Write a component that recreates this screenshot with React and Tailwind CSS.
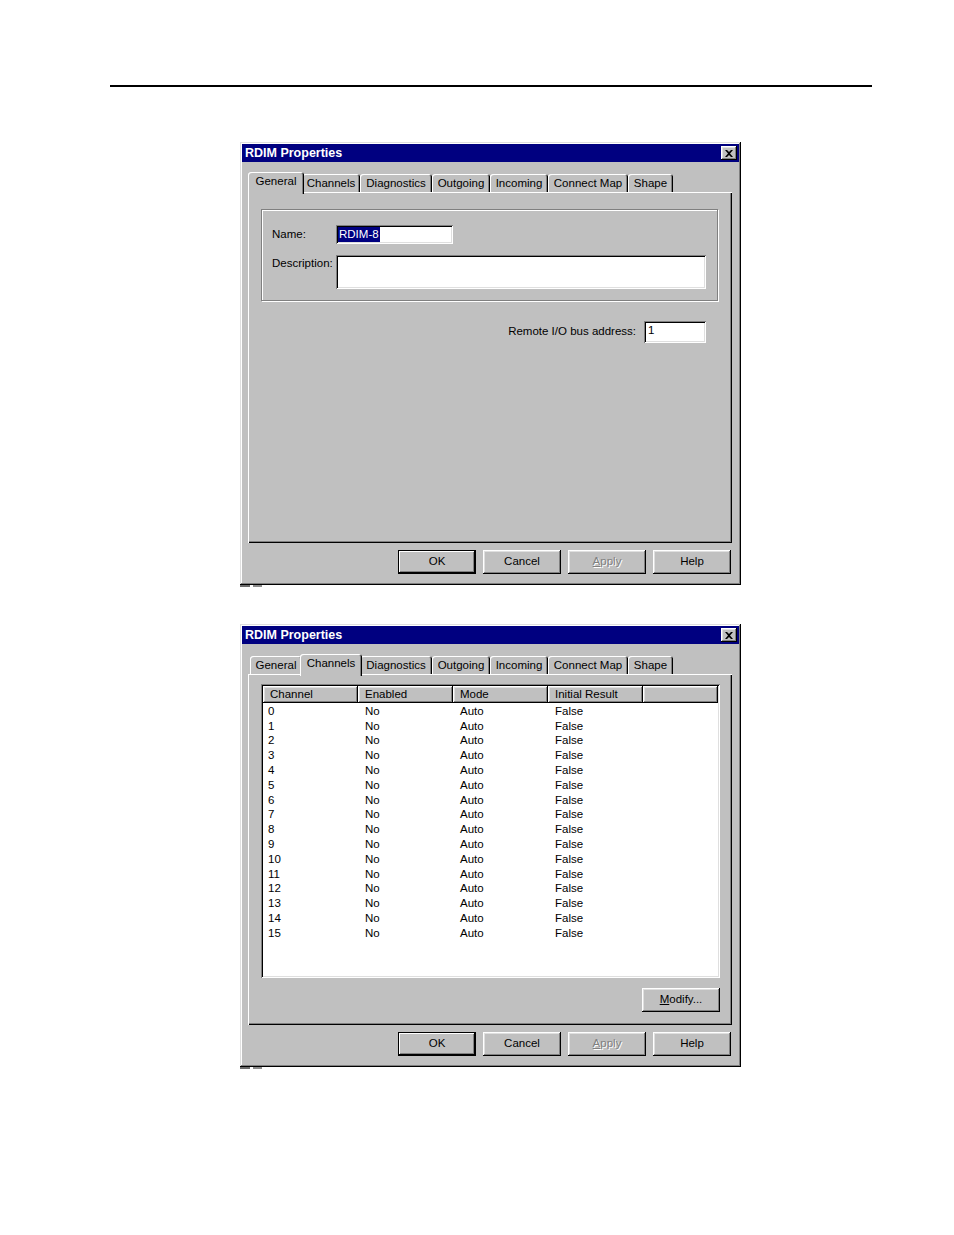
import React from "react";

const font = { fontFamily: '"Liberation Sans", Arial, sans-serif' };

// win95 bevels
const raised =
  "shadow-[inset_-1px_-1px_0_#000,inset_1px_1px_0_#fff,inset_-2px_-2px_0_#808080,inset_2px_2px_0_#dfdfdf]";
const raisedDefault =
  "shadow-[inset_0_0_0_1px_#000,inset_-2px_-2px_0_#000,inset_2px_2px_0_#fff,inset_-3px_-3px_0_#808080]";
const sunken =
  "shadow-[inset_1px_1px_0_#808080,inset_-1px_-1px_0_#fff,inset_2px_2px_0_#000,inset_-2px_-2px_0_#dfdfdf]";
const windowEdge =
  "shadow-[inset_-1px_-1px_0_#000,inset_1px_1px_0_#dfdfdf,inset_-2px_-2px_0_#808080,inset_2px_2px_0_#fff]";
const pageEdge =
  "shadow-[inset_1px_1px_0_#fff,inset_-1px_-1px_0_#000,inset_-2px_-2px_0_#808080]";
const tabEdge =
  "shadow-[inset_1px_1px_0_#fff,inset_-1px_0_0_#000,inset_-2px_0_0_#808080]";

const tabs = [
  ["General", 52],
  ["Channels", 58],
  ["Diagnostics", 72],
  ["Outgoing", 58],
  ["Incoming", 58],
  ["Connect Map", 80],
  ["Shape", 45],
];

function Button({ children, primary, disabled }) {
  return (
    <div
      className={`flex h-[24px] w-[78px] items-center justify-center bg-[#c0c0c0] text-[11.5px] ${
        primary ? raisedDefault : raised
      } ${disabled ? "text-[#808080] [text-shadow:1px_1px_0_#fff]" : "text-black"}`}
    >
      {children}
    </div>
  );
}

function TabStrip({ active }) {
  return (
    <div className="relative z-10 flex h-[20px] items-end pl-[2px]">
      {tabs.map(([label, w]) => {
        const on = label === active;
        return (
          <div
            key={label}
            style={{ width: on ? w + 4 : w }}
            className={`flex items-center justify-center rounded-t-[3px] bg-[#c0c0c0] text-[11.5px] text-black ${tabEdge} ${
              on ? "relative z-10 -mx-[2px] -mb-[2px] h-[22px] pb-[3px]" : "h-[18px] pt-[2px]"
            }`}
          >
            {label}
          </div>
        );
      })}
    </div>
  );
}

function CloseBox() {
  return (
    <div className={`flex h-[14px] w-[16px] items-center justify-center bg-[#c0c0c0] ${raised}`}>
      <svg width="8" height="7" viewBox="0 0 8 7">
        <path d="M0 0h2l2 2 2-2h2L5 3.5 8 7H6L4 5 2 7H0l3-3.5z" fill="#000" />
      </svg>
    </div>
  );
}

function Dialog({ active, children }) {
  return (
    <div className="ml-[240px]">
      <div className={`flex h-[443px] w-[501px] flex-col bg-[#c0c0c0] p-[2px] ${windowEdge}`}>
        <div className="flex h-[18px] items-center justify-between bg-[#000080] pl-[3px] pr-[2px]">
          <span className="text-[12.5px] font-bold text-white">RDIM Properties</span>
          <CloseBox />
        </div>
        <div className="flex flex-col px-[6px] pt-[10px]">
          <TabStrip active={active} />
          <div className={`h-[351px] w-[484px] bg-[#c0c0c0] ${pageEdge}`}>{children}</div>
          <div className="mt-[7px] flex justify-end gap-[7px] pr-[2px]">
            <Button primary>OK</Button>
            <Button>Cancel</Button>
            <Button disabled>
              <span className="underline">A</span>pply
            </Button>
            <Button>Help</Button>
          </div>
        </div>
      </div>
      <div className="flex gap-[3px]">
        <div className="h-[2px] w-[10px] bg-[#6b6b6b]" />
        <div className="h-[2px] w-[9px] bg-[#8a8a8a]" />
      </div>
    </div>
  );
}

function GeneralPage() {
  return (
    <div className="flex flex-col pl-[13px] pr-[14px] pt-[17px]">
      <div className="flex h-[92px] flex-col border border-[#808080] pl-[10px] pr-[11px] pt-[15px] shadow-[inset_1px_1px_0_#fff,1px_1px_0_#fff]">
        <div className="flex items-center">
          <span className="w-[64px] text-[11.5px] text-black">Name:</span>
          <div className={`flex h-[19px] w-[117px] items-center bg-white pl-[2px] ${sunken}`}>
            <span className="bg-[#000080] px-[1px] text-[11.5px] leading-[15px] text-white">RDIM-8</span>
          </div>
        </div>
        <div className="mt-[11px] flex items-start">
          <span className="w-[64px] text-[11.5px] text-black">Description:</span>
          <div className={`h-[34px] flex-1 bg-white ${sunken}`} />
        </div>
      </div>
      <div className="mt-[20px] flex items-center justify-end pr-[12px]">
        <span className="mr-[8px] text-[11.5px] text-black">Remote I/O bus address:</span>
        <div className={`flex h-[22px] w-[62px] items-start bg-white pl-[4px] pt-[2px] ${sunken}`}>
          <span className="text-[11.5px] leading-[14px] text-black">1</span>
        </div>
      </div>
    </div>
  );
}

const columns = ["Channel", "Enabled", "Mode", "Initial Result"];
const rows = Array.from({ length: 16 }, (_, i) => [String(i), "No", "Auto", "False"]);

function ChannelsPage() {
  return (
    <div className="flex flex-col pl-[13px] pr-[12px] pt-[10px]">
      <div className={`flex h-[294px] w-[459px] flex-col bg-white p-[2px] ${sunken}`}>
        <div className="flex h-[17px]">
          {columns.map((c) => (
            <div
              key={c}
              className={`flex w-[95px] items-center bg-[#c0c0c0] pl-[7px] pt-[1px] text-[11.5px] text-black ${raised}`}
            >
              {c}
            </div>
          ))}
          <div className={`flex-1 bg-[#c0c0c0] ${raised}`} />
        </div>
        <div className="pt-[1px]">
          {rows.map((r) => (
            <div key={r[0]} className="flex h-[14.8px] items-center text-[11.5px] text-black">
              {r.map((v, j) => (
                <div key={j} className={`w-[95px] ${j === 0 ? "pl-[5px]" : "pl-[7px]"}`}>
                  {v}
                </div>
              ))}
            </div>
          ))}
        </div>
      </div>
      <div className="mt-[10px] flex justify-end">
        <Button>
          <span className="underline">M</span>odify...
        </Button>
      </div>
    </div>
  );
}

export default function App() {
  return (
    <div className="h-[1235px] w-[954px] bg-white" style={font}>
      <div className="pl-[110px] pt-[85px]">
        <div className="h-[2px] w-[762px] bg-black" />
      </div>
      <div className="mt-[55px]">
        <Dialog active="General">
          <GeneralPage />
        </Dialog>
      </div>
      <div className="mt-[37px]">
        <Dialog active="Channels">
          <ChannelsPage />
        </Dialog>
      </div>
    </div>
  );
}
